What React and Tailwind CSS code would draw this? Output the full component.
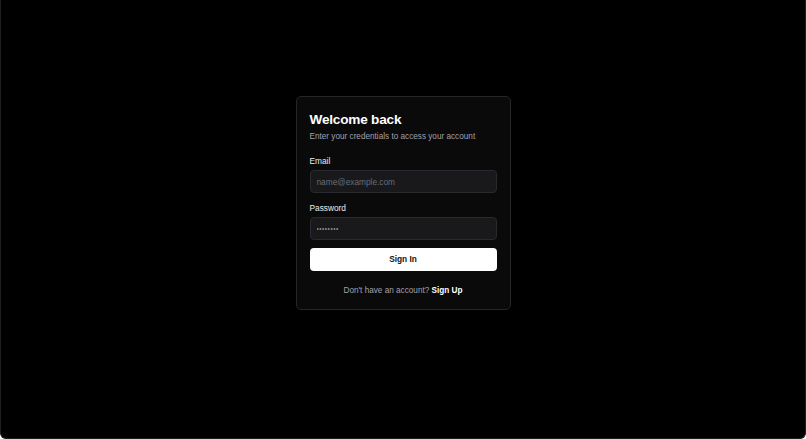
export default function App() {
  return (
    <div
      className="h-[439px] w-full bg-black border-l border-r border-b border-[#1f1f1f] rounded-b-[6px] flex items-center justify-center"
      style={{ fontFamily: "'Liberation Sans', Arial, sans-serif" }}
    >
      <div className="w-[215px] -mt-[32px] bg-[#0a0a0a] border border-[#262626] rounded-[5px] px-[13px] pt-[14px] pb-[12px]">
        <h1 className="text-[13.6px] leading-[17px] font-bold text-white tracking-[-0.2px]">Welcome back</h1>
        <p className="mt-[3px] text-[8.2px] leading-[12px] text-[#a1a1aa]">
          Enter your credentials to access your account
        </p>

        <label className="block mt-[12px] text-[8.3px] leading-[12px] font-medium text-[#ececec]">Email</label>
        <input
          type="email"
          placeholder="name@example.com"
          className="mt-[3px] w-full h-[23px] px-[6px] rounded-[4px] bg-[#19191b] border border-[#2a2a2e] text-[8.3px] text-white placeholder:text-[#676d7c] outline-none"
        />

        <label className="block mt-[9px] text-[8.3px] leading-[12px] font-medium text-[#ececec]">Password</label>
        <input
          type="password"
          defaultValue="password"
          className="mt-[3px] w-full h-[23px] px-[6px] rounded-[4px] bg-[#19191b] border border-[#2a2a2e] text-[6.5px] tracking-[0.5px] text-[#8a8a92] outline-none"
        />

        <button className="mt-[8px] w-full h-[23px] rounded-[4px] bg-white text-[#111] text-[8.3px] font-semibold">
          Sign In
        </button>

        <p className="mt-[14px] text-center text-[8.2px] leading-[12px] text-[#a1a1aa]">
          Don't have an account? <span className="text-white font-semibold">Sign Up</span>
        </p>
      </div>
    </div>
  );
}
